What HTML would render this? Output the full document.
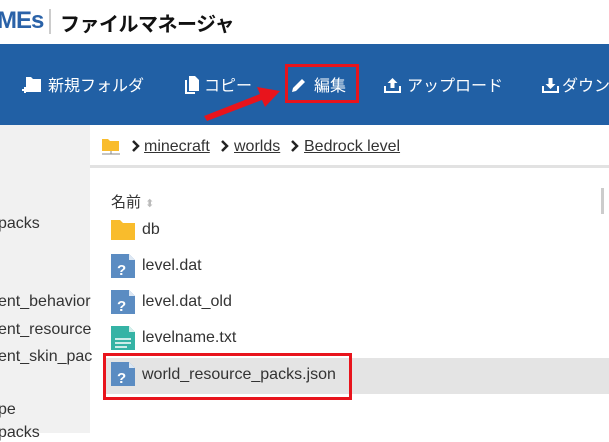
<!DOCTYPE html>
<html><head><meta charset="utf-8"><style>
*{margin:0;padding:0;box-sizing:border-box}
body{width:609px;height:433px;overflow:hidden;background:#fff;position:relative;font-family:"Liberation Sans","Noto Sans CJK JP",sans-serif}
.a{position:absolute;white-space:nowrap}
.tb{color:#fff;font-size:16px;top:72px}
.side{color:#333;font-size:16px;left:-2px}
.f{color:#333;font-size:16px;left:142px}
.bc{font-size:16px;color:#333;top:138px;text-decoration:underline}
.ch{top:134px;font-size:20px;font-weight:bold;color:#222}
</style></head><body>
<div class="a" style="left:-3px;top:7px;font-size:24px;font-weight:bold;color:#2a62a8;letter-spacing:-1px">MEs</div>
<div class="a" style="left:49px;top:9px;width:2px;height:25px;background:#ccc"></div>
<div class="a" style="left:60px;top:8px;font-size:20px;font-weight:bold;color:#111;letter-spacing:-0.5px">ファイルマネージャ</div>
<div class="a" style="left:0;top:44px;width:609px;height:81px;background:#2160a5"></div>
<svg class="a" style="left:22px;top:75px" width="20" height="20"><path d="M4 2h5l2 2h8v13H4z" fill="#fff"/><path d="M0 15h6M3 12v6" stroke="#fff" stroke-width="2"/></svg>
<div class="a tb" style="left:48px">新規フォルダ</div>
<svg class="a" style="left:185px;top:76px" width="14" height="18"><path d="M4 0h6l4 4v11H4z" fill="#fff"/><path d="M1 4v13h9" stroke="#fff" stroke-width="2" fill="none"/></svg>
<div class="a tb" style="left:204px">コピー</div>
<div class="a" style="left:285px;top:64px;width:74px;height:39px;border:3px solid #e8141c"></div>
<svg class="a" style="left:291px;top:77px" width="16" height="16"><path d="M1 15l1-4 9-9 3 3-9 9z" fill="#fff"/></svg>
<div class="a tb" style="left:314px">編集</div>
<svg class="a" style="left:384px;top:76px" width="17" height="17"><path d="M1 10v6h15v-6" stroke="#fff" stroke-width="2" fill="none"/><path d="M8.5 2l-5 5h3v5h4V7h3z" fill="#fff"/></svg>
<div class="a tb" style="left:407px">アップロード</div>
<svg class="a" style="left:542px;top:76px" width="17" height="17"><path d="M1 10v6h15v-6" stroke="#fff" stroke-width="2" fill="none"/><path d="M8.5 13l-5-5h3V2h4v6h3z" fill="#fff"/></svg>
<div class="a tb" style="left:562px">ダウン</div>
<svg class="a" style="left:200px;top:82px" width="85" height="40"><path d="M4 34L60 12l-3-7 23 4-15 16-3-7L7 39z" fill="#e8141c"/></svg>
<div class="a" style="left:0;top:125px;width:90px;height:308px;background:#f1f1f1"></div>
<div class="a side" style="top:215px">packs</div>
<div class="a side" style="top:293px">ent_behavior</div>
<div class="a side" style="top:321px">ent_resource</div>
<div class="a side" style="top:348px">ent_skin_pac</div>
<div class="a side" style="top:401px">pe</div>
<div class="a side" style="top:424px">packs</div>
<div class="a" style="left:90px;top:165px;width:519px;height:3px;background:#e2e2e2"></div>
<svg class="a" style="left:101px;top:137px" width="20" height="18"><path d="M1 2h6l2 2h9v10H1z" fill="#f9bc2c"/><path d="M1 17h18M10 14v3" stroke="#888" stroke-width="1"/></svg>
<svg class="a" style="left:131px;top:140px" width="10" height="12"><path d="M2 1l5 5-5 5" stroke="#222" stroke-width="2.5" fill="none"/></svg>
<div class="a bc" style="left:144px">minecraft</div>
<svg class="a" style="left:220px;top:140px" width="10" height="12"><path d="M2 1l5 5-5 5" stroke="#222" stroke-width="2.5" fill="none"/></svg>
<div class="a bc" style="left:234px">worlds</div>
<svg class="a" style="left:290px;top:140px" width="10" height="12"><path d="M2 1l5 5-5 5" stroke="#222" stroke-width="2.5" fill="none"/></svg>
<div class="a bc" style="left:304px">Bedrock level</div>
<div class="a" style="left:601px;top:188px;width:3px;height:26px;background:#ccc"></div>
<div class="a" style="left:111px;top:191px;font-size:15px;color:#333">名前 <span style="color:#bbb;font-size:11px">⬍</span></div>
<div class="a" style="left:103px;top:358px;width:506px;height:36px;background:#e4e4e4"></div>
<div class="a" style="left:103px;top:353px;width:249px;height:47px;border:3px solid #e8141c"></div>
<svg class="a" style="left:111px;top:220px" width="24" height="20"><path d="M0 0h9l3 3h12v17H0z" fill="#f9bc2c"/></svg>
<div class="a f" style="top:221px">db</div>
<svg width="0" height="0" style="position:absolute"><defs><g id="q"><path d="M0 0h18l6 6v18H0z" fill="#5b8cc2"/><path d="M18 0v6h6" fill="#dde8f4"/><text x="6" y="21" font-size="15" font-weight="bold" fill="#fff" font-family="Liberation Sans">?</text></g></defs></svg>
<svg class="a" style="left:111px;top:254px" width="24" height="24"><use href="#q"/></svg>
<div class="a f" style="top:257px">level.dat</div>
<svg class="a" style="left:111px;top:290px" width="24" height="24"><use href="#q"/></svg>
<div class="a f" style="top:293px">level.dat_old</div>
<svg class="a" style="left:111px;top:326px" width="24" height="24"><path d="M0 0h18l6 6v18H0z" fill="#35b3a5"/><path d="M18 0v6h6" fill="#d5f0ec"/><path d="M4 13h16M4 17h16M4 21h12" stroke="#fff" stroke-width="1.5"/></svg>
<div class="a f" style="top:329px">levelname.txt</div>
<svg class="a" style="left:111px;top:362px" width="24" height="24"><use href="#q"/></svg>
<div class="a f" style="top:366px">world_resource_packs.json</div>
</body></html>
